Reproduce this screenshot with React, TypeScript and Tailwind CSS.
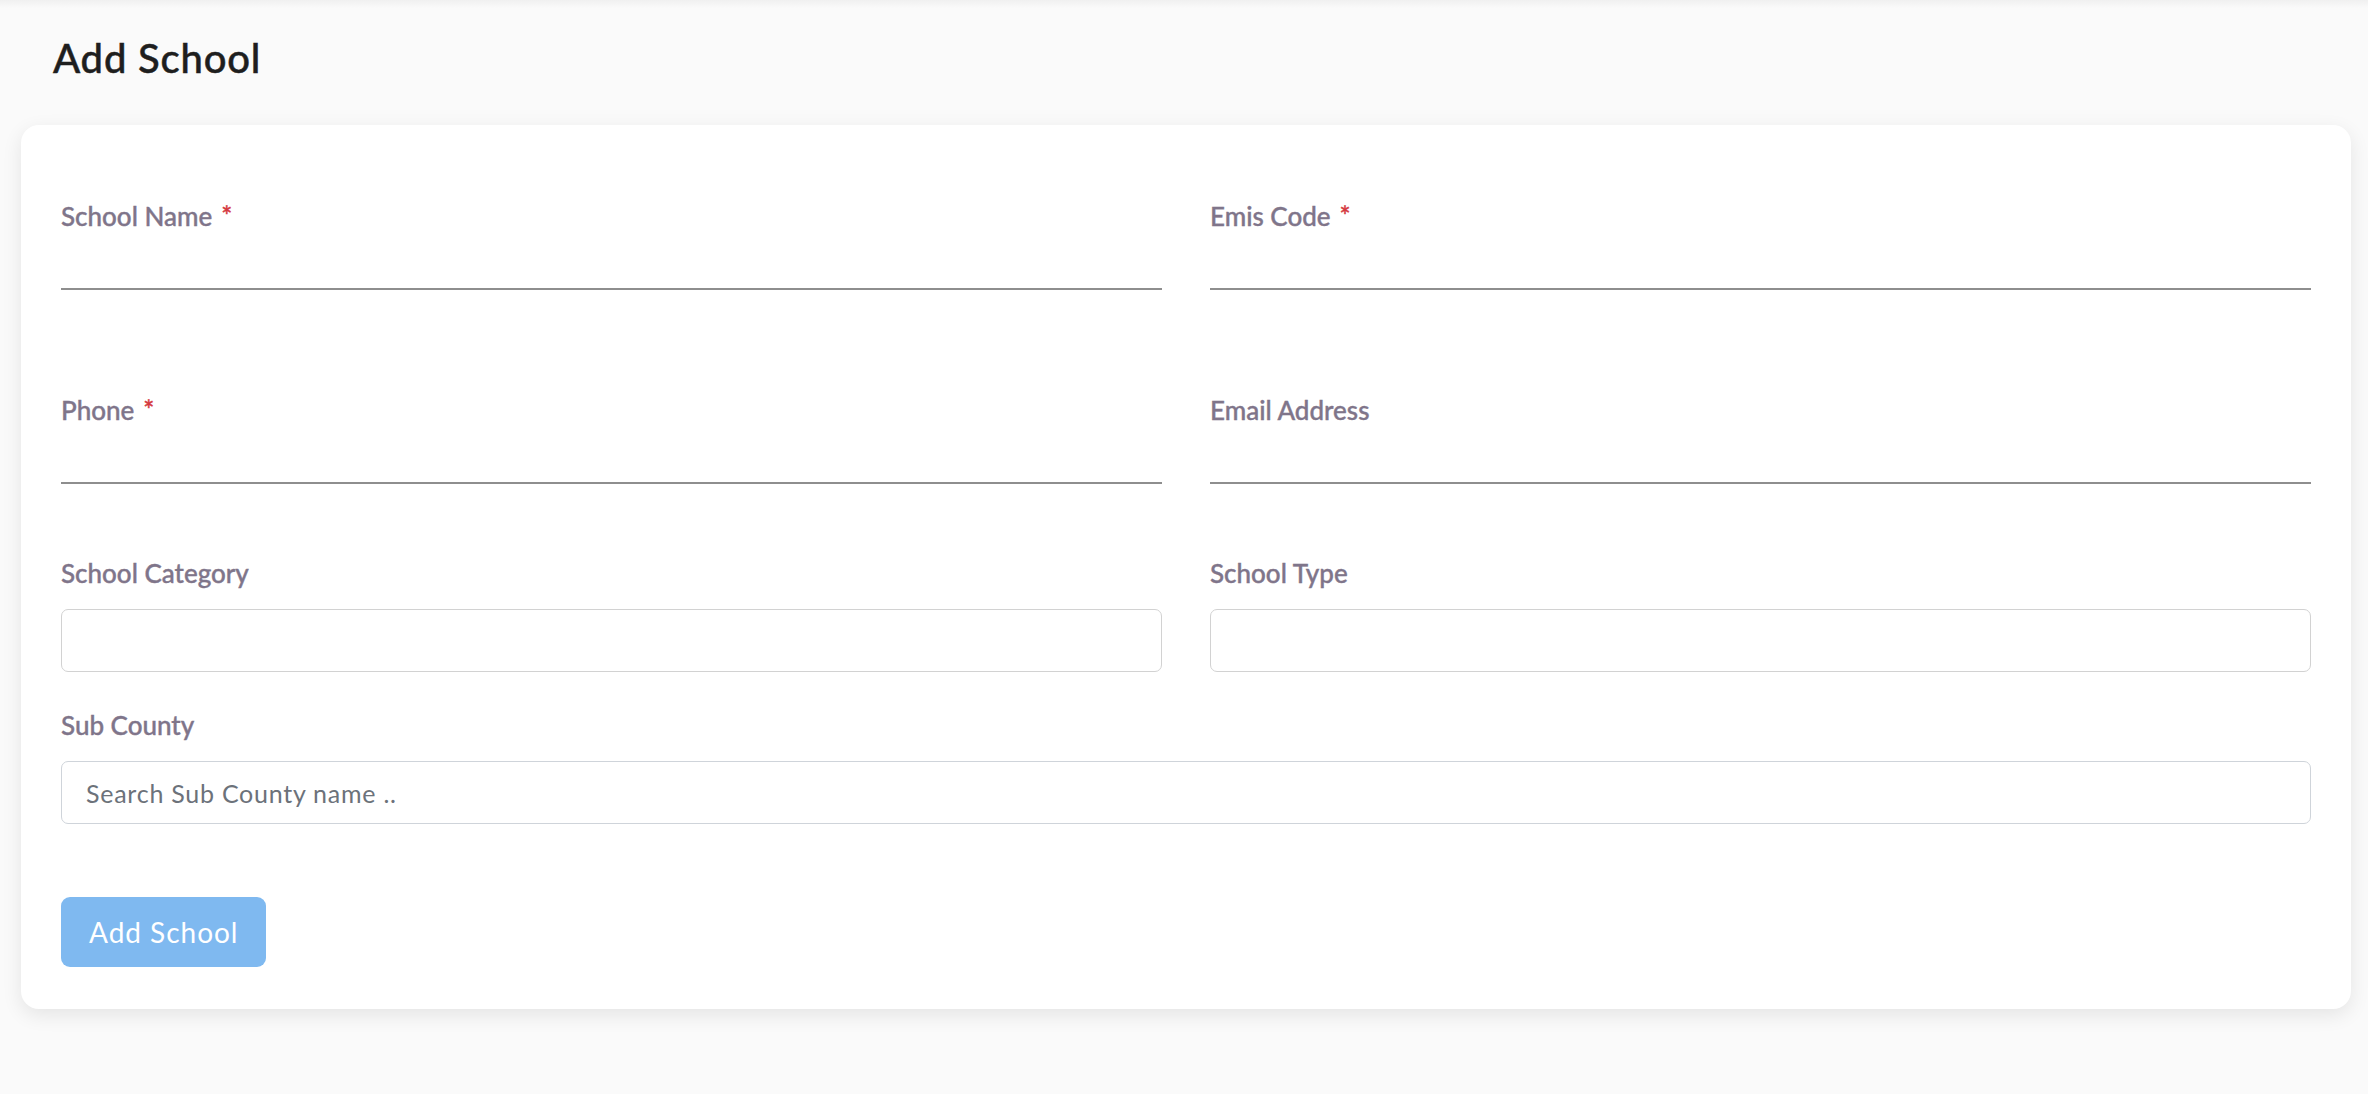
import React from "react";

type FieldProps = {
  label: string;
  required?: boolean;
  className?: string;
};

function Label({ label, required }: { label: string; required?: boolean }) {
  return (
    <label className="block text-[26px] leading-8 font-medium text-[#7f758a] [-webkit-text-stroke:0.4px_currentColor]">
      {label}
      {required && <span className="ml-[9px] text-[#d5383f]">*</span>}
    </label>
  );
}

function LineField({ label, required, className = "" }: FieldProps) {
  return (
    <div className={className}>
      <Label label={label} required={required} />
      <input
        type="text"
        className="block h-[58px] w-full border-0 border-b-2 border-[#8e8e8e] bg-transparent text-[24px] outline-none"
      />
    </div>
  );
}

function SelectField({ label, className = "" }: FieldProps) {
  return (
    <div className={className}>
      <Label label={label} />
      <div className="mt-[20px] h-[63px] w-full rounded-[7px] border-[1.5px] border-[#d2d2d2] bg-white" />
    </div>
  );
}

export default function App() {
  return (
    <div className="min-h-screen bg-[#fafafa] font-['Lato',sans-serif]">
      <div className="h-[8px] bg-gradient-to-b from-[#f0f0f0] to-[#fafafa]" />

      <h1 className="pl-[53px] pt-[26px] text-[40px] leading-[48px] font-medium tracking-[0.02em] text-[#1e1e1e] [-webkit-text-stroke:0.5px_currentColor]">
        Add School
      </h1>

      <div className="ml-[21px] mr-[17px] mt-[43px] rounded-[18px] bg-white px-10 pt-[75px] pb-[42px] shadow-[0_6px_20px_rgba(0,0,0,0.09)]">
        <div className="grid grid-cols-2 gap-x-12">
          <LineField label="School Name" required />
          <LineField label="Emis Code" required />
          <LineField label="Phone" required className="mt-[104px]" />
          <LineField label="Email Address" className="mt-[104px]" />
          <SelectField label="School Category" className="mt-[73px]" />
          <SelectField label="School Type" className="mt-[73px]" />
        </div>

        <div className="mt-[37px]">
          <Label label="Sub County" />
          <input
            type="text"
            placeholder="Search Sub County name .."
            className="mt-[20px] block h-[63px] w-full rounded-[7px] border-[1.5px] border-[#cfd4da] bg-white pl-[24px] text-[25px] tracking-[0.03em] text-[#495057] outline-none placeholder:text-[#6c727a]"
          />
        </div>

        <button
          type="button"
          className="mt-[73px] flex h-[70px] items-center rounded-[9px] bg-[#7fb9f0] px-[28px] text-[28px] tracking-[0.035em] text-white"
        >
          Add School
        </button>
      </div>
    </div>
  );
}
